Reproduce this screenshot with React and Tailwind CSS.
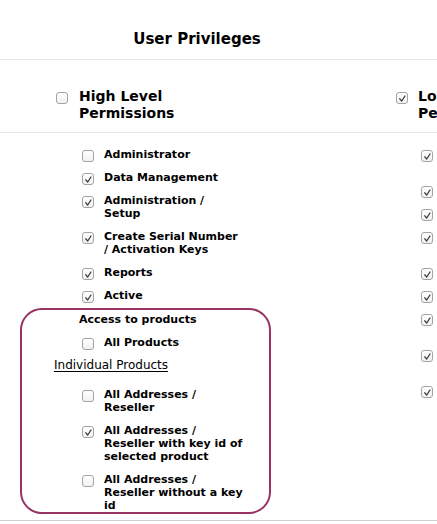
import React from "react";

const font = { fontFamily: "'DejaVu Sans', Verdana, sans-serif" };

function Box({ checked }) {
  return (
    <span className="-mb-[2px] mt-[2px] flex h-[12px] w-[12px] shrink-0 items-center justify-center rounded-[3px] border border-[#a3a3a3] bg-gradient-to-b from-white to-[#f1f1f1]">
      {checked && (
        <svg width="9" height="9" viewBox="0 0 9 9">
          <path d="M1.8 4.8 L3.7 7 L7 2" fill="none" stroke="#3a3a3a" strokeWidth="1.3" strokeLinecap="round" strokeLinejoin="round" />
        </svg>
      )}
    </span>
  );
}

function Item({ checked, lines }) {
  return (
    <div className="flex items-start gap-[10px]">
      <Box checked={checked} />
      <div className="text-[11px] font-bold leading-[13px] whitespace-nowrap text-black">
        {lines.map((l, i) => (
          <div key={i}>{l}</div>
        ))}
      </div>
    </div>
  );
}

const highLevel = [
  { checked: false, lines: ["Administrator"] },
  { checked: true, lines: ["Data Management"] },
  { checked: true, lines: ["Administration /", "Setup"] },
  { checked: true, lines: ["Create Serial Number", "/ Activation Keys"] },
  { checked: true, lines: ["Reports"] },
  { checked: true, lines: ["Active"] },
];

const products = [
  { checked: false, lines: ["All Addresses /", "Reseller"] },
  { checked: true, lines: ["All Addresses /", "Reseller with key id of", "selected product"] },
  { checked: false, lines: ["All Addresses /", "Reseller without a key", "id"] },
];

// line counts of the low level rows (their labels are off screen)
const lowLevel = [2, 1, 1, 2, 1, 1, 2, 2, 1];

export default function App() {
  return (
    <div className="h-[524px] w-full overflow-hidden bg-white" style={font}>
      <div className="w-[640px]">
        <div className="h-[60px] border-b border-[#e6e6e6] pt-[30px]">
          <div className="w-[394px] text-center text-[15px] font-bold leading-[18px] text-black">User Privileges</div>
        </div>

        <div className="flex h-[73px] border-b border-[#e6e6e6] pt-[28px]">
          <div className="flex w-[390px] items-start gap-[11px] pl-[56px]">
            <span className="mt-[2px]">
              <Box checked={false} />
            </span>
            <div className="text-[14px] font-bold leading-[17px] text-black">
              <div>High Level</div>
              <div>Permissions</div>
            </div>
          </div>
          <div className="flex items-start gap-[10px] pl-[6px]">
            <span className="mt-[2px]">
              <Box checked={true} />
            </span>
            <div className="text-[14px] font-bold leading-[17px] text-black whitespace-nowrap">
              <div>Lo</div>
              <div>Pe</div>
            </div>
          </div>
        </div>

        <div className="flex pt-[15px]">
          <div className="w-[390px]">
            <div className="flex flex-col gap-[10px] pl-[82px]">
              {highLevel.map((it, i) => (
                <Item key={i} checked={it.checked} lines={it.lines} />
              ))}
            </div>

            <div className="ml-[20px] mt-[6px] h-[206px] w-[251px] rounded-[22px] border-2 border-[#973263] pt-[3px]">
              <div className="pl-[57px] text-[11px] font-bold leading-[13px] text-black">Access to products</div>
              <div className="mt-[10px] pl-[60px]">
                <Item checked={false} lines={["All Products"]} />
              </div>
              <div className="mt-[9px] pl-[32px] text-[12px] leading-[15px] text-black">
                <span className="underline underline-offset-[2px]">Individual Products</span>
              </div>
              <div className="mt-[15px] flex flex-col gap-[10px] pl-[60px]">
                {products.map((it, i) => (
                  <Item key={i} checked={it.checked} lines={it.lines} />
                ))}
              </div>
            </div>
          </div>

          <div className="flex flex-col gap-[10px] pl-[31px]">
            {lowLevel.map((n, i) => (
              <div key={i} className="flex items-start">
                <Box checked={true} />
                <div className={n === 2 ? "h-[26px]" : "h-[13px]"} />
              </div>
            ))}
          </div>
        </div>

        <div className="mt-[6px] border-b border-[#cfcfcf]" />
      </div>
    </div>
  );
}
